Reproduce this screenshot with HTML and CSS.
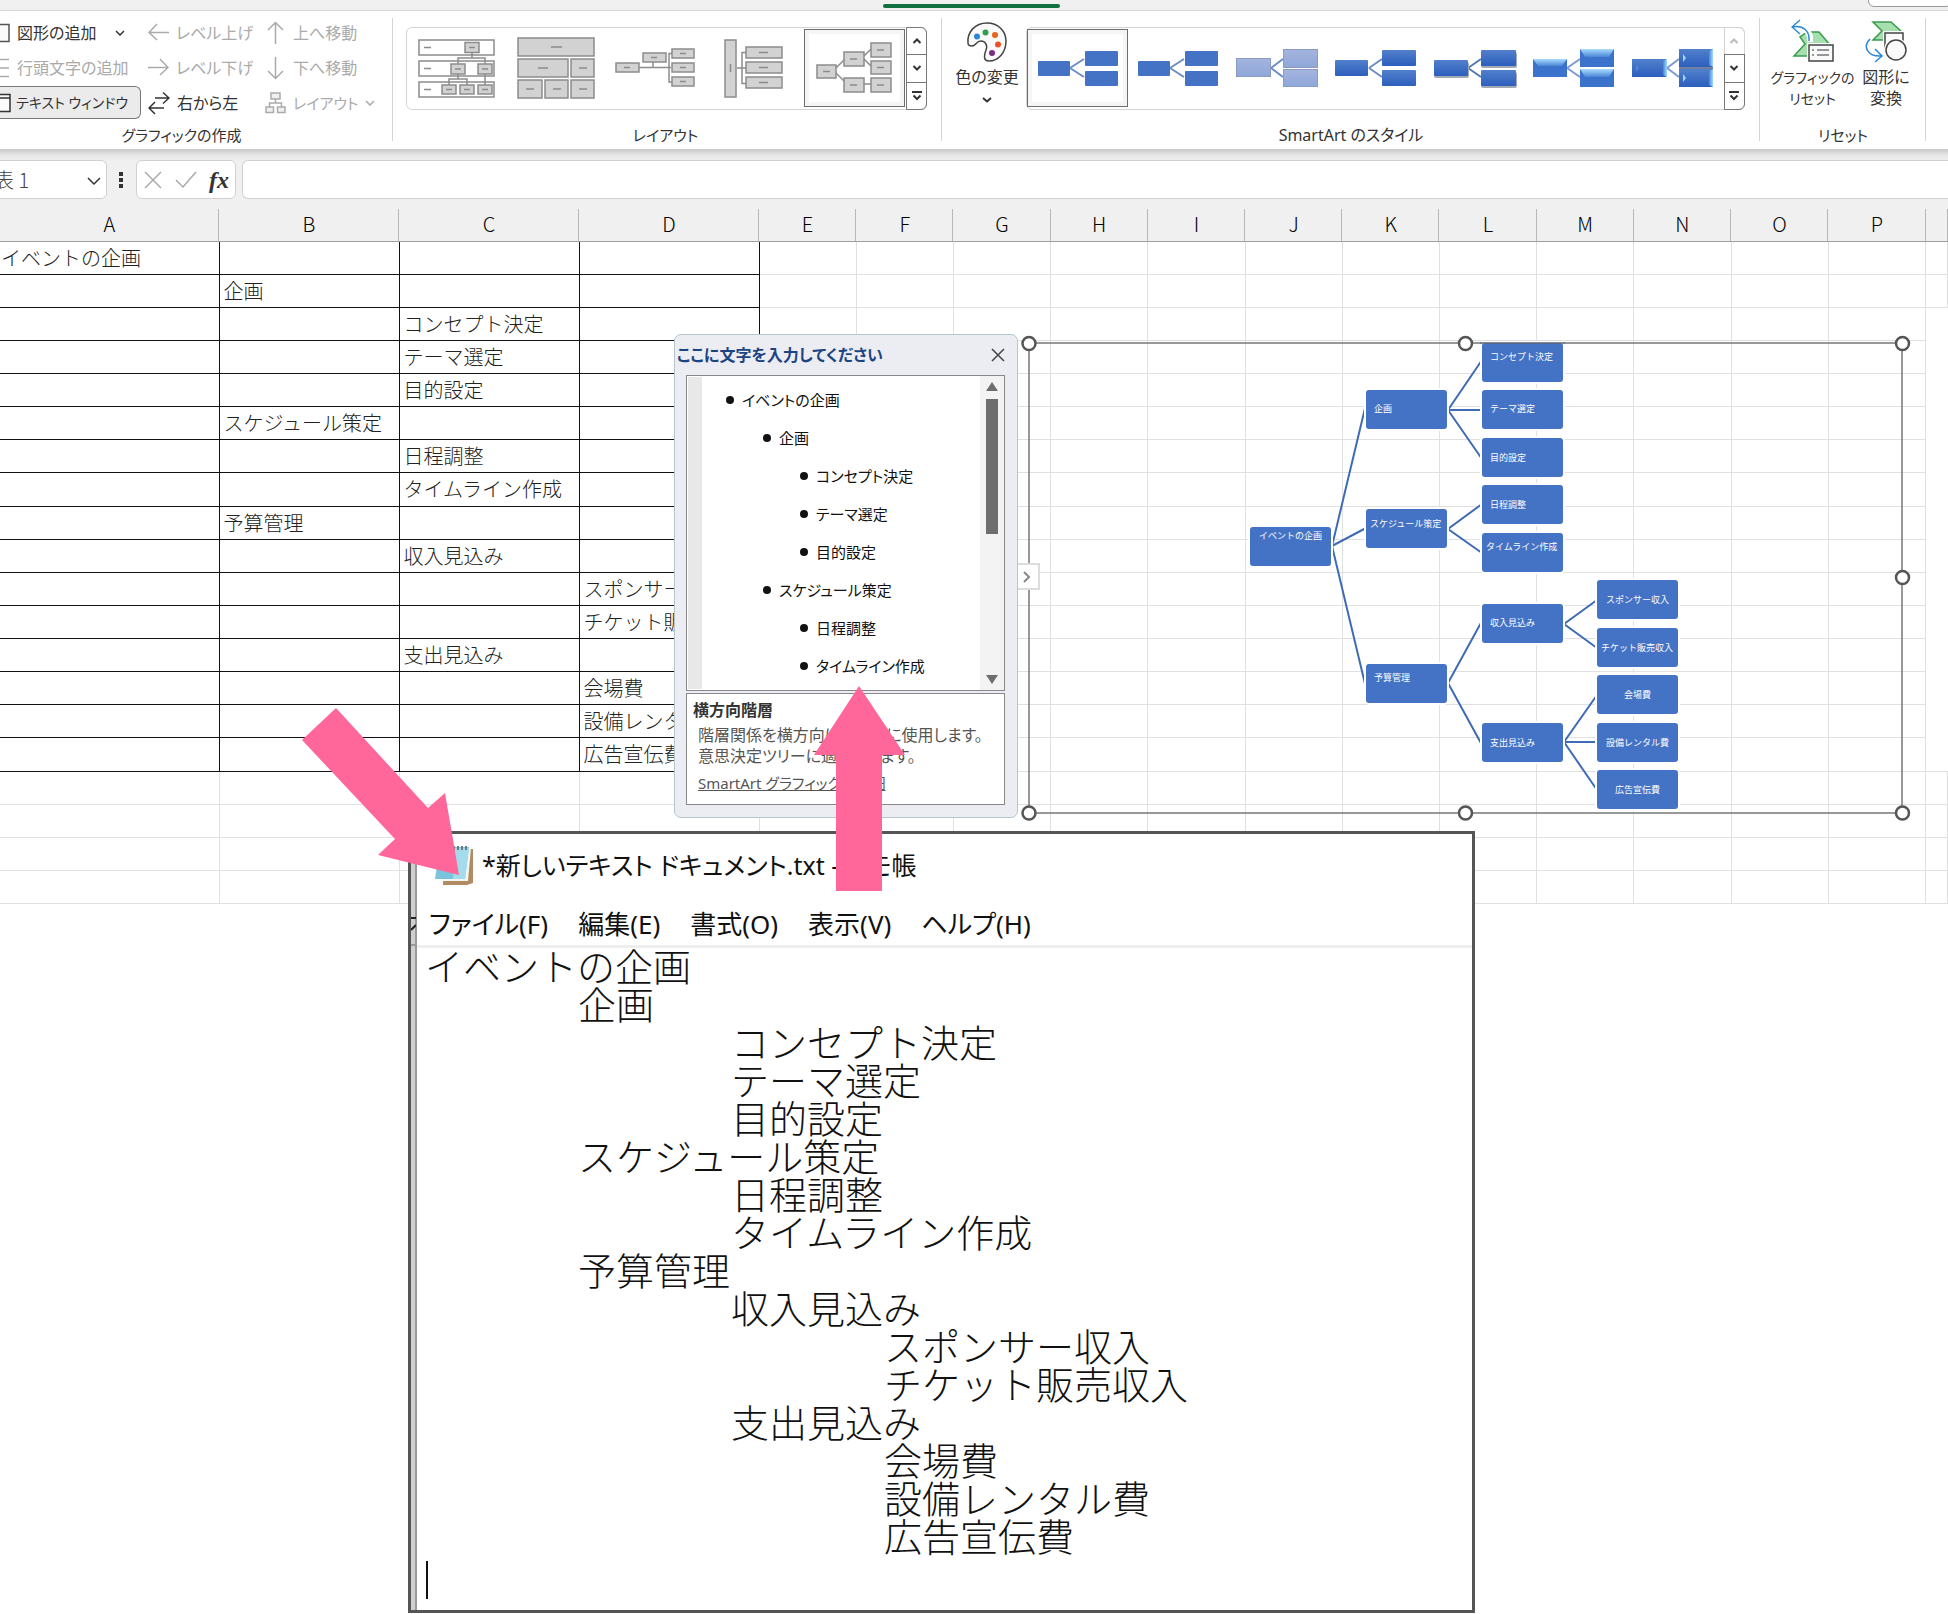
FILE: index.html
```html
<!DOCTYPE html>
<html lang="ja">
<head>
<meta charset="utf-8">
<title>イベントの企画 - Excel</title>
<link rel="stylesheet" href="styles.css">
</head>
<body>
<svg width="0" height="0" class="defs" aria-hidden="true">
  <defs>
    <linearGradient id="g-dark" x1="0" y1="0" x2="0" y2="1"><stop offset="0" stop-color="#5280cc"/><stop offset="1" stop-color="#2c5fbd"/></linearGradient>
    <linearGradient id="g-pale" x1="0" y1="0" x2="0" y2="1"><stop offset="0" stop-color="#a4b4de"/><stop offset="1" stop-color="#8fa7d9"/></linearGradient>
    <linearGradient id="g-shine" x1="0" y1="0" x2="0" y2="1"><stop offset="0" stop-color="#a9dcff"/><stop offset="1" stop-color="#4a86d6"/></linearGradient>
    <linearGradient id="g-side" x1="0" y1="0" x2="1" y2="0"><stop offset="0" stop-color="#4a86d6"/><stop offset="1" stop-color="#9fdcff"/></linearGradient>
  </defs>
</svg>

<div class="tabstrip"><span class="tab-active"></span><span class="tab-box"></span></div>

<div class="ribbon">
  <section class="group group-create">
    <div class="create-grid">
      <button class="cmd"><svg width="10" height="22"><path d="M0 2.5H9V19.500H0" fill="#fafafa" stroke="#555" stroke-width="1.500"/></svg>図形の追加<svg class="drop" width="10" height="6"><path d="M1 1L5 5L9 1" fill="none" stroke="#333" stroke-width="1.500"/></svg></button>
      <button class="cmd off"><svg width="21" height="22"><path d="M21 10.500H1M9 2L1 10.500L9 18" fill="none" stroke="#aaa" stroke-width="1.500"/></svg>レベル上げ</button>
      <button class="cmd off"><svg width="21" height="24"><path d="M10.500 23V2M3 9L10.500 1.500L18 9" fill="none" stroke="#aaa" stroke-width="1.500"/></svg>上へ移動</button>
      <button class="cmd off"><svg width="10" height="22"><path d="M0 2.500H9M0 11H9M0 19.500H9" stroke="#aaa" stroke-width="1.500"/></svg>行頭文字の追加</button>
      <button class="cmd off"><svg width="21" height="22"><path d="M0 10.500H20M12 2L20 10.500L12 18" fill="none" stroke="#aaa" stroke-width="1.500"/></svg>レベル下げ</button>
      <button class="cmd off"><svg width="21" height="24"><path d="M10.500 1V22M3 15L10.500 22.500L18 15" fill="none" stroke="#aaa" stroke-width="1.500"/></svg>下へ移動</button>
      <button class="cmd pressed"><svg width="11" height="22"><path d="M0 2.500H10V19.500H0M0 6H10" fill="#fafafa" stroke="#333" stroke-width="1.500"/></svg>テキスト ウィンドウ</button>
      <button class="cmd"><svg width="22" height="24"><path d="M7 7H21M15 1.500L21 7L15 12.500M16 17H1M7 11L1 17L7 23" fill="none" stroke="#333" stroke-width="1.500"/></svg>右から左</button>
      <button class="cmd off kana"><svg width="21" height="22"><g fill="#f0f0f0" stroke="#aaa" stroke-width="1.500"><path d="M10.500 7V11M4.500 15V11H16.500V15" fill="none"/><rect x="6" y="1" width="9" height="6"/><rect x="1" y="15" width="7.500" height="5.500"/><rect x="12.500" y="15" width="7.500" height="5.500"/></g></svg>レイアウト<svg width="10" height="6"><path d="M1 1L5 5L9 1" fill="none" stroke="#aaa" stroke-width="1.500"/></svg></button>
    </div>
    <h2 class="group-label">グラフィックの作成</h2>
  </section>

  <section class="group group-layout">
    <div class="gallery">
      <button class="thumb" aria-label="レイアウト 1"><svg width="78" height="62"><g fill="#fff" stroke="#8c8c8c" stroke-width="1.500"><rect x="1" y="3" width="75" height="15"/><rect x="1" y="24" width="75" height="15"/><rect x="1" y="45" width="75" height="15"/><path d="M54 16V21M40 27V21H67V27M40 37V42M31 48V42H49V48M67 37V48" fill="none"/><g fill="#d2d2d2"><rect x="47" y="5.500" width="14" height="10"/><rect x="33" y="27" width="14" height="10"/><rect x="60" y="27" width="14" height="10"/><rect x="24" y="48" width="14" height="9"/><rect x="42" y="48" width="14" height="9"/><rect x="60" y="48" width="14" height="9"/></g><path d="M6 10.500H13M6 31.500H13M6 52.500H13M51 10.500H57M37 32H43M64 32H70M28 52.500H34M46 52.500H52M64 52.500H70"/></g></svg></button>
      <button class="thumb" aria-label="レイアウト 2"><svg width="78" height="62"><g fill="#d2d2d2" stroke="#8c8c8c" stroke-width="1.500"><rect x="1" y="1" width="76" height="18"/><rect x="1" y="22" width="50" height="18"/><rect x="54" y="22" width="23" height="18"/><rect x="1" y="43" width="24" height="18"/><rect x="28" y="43" width="23" height="18"/><rect x="54" y="43" width="23" height="18"/><path d="M34 10H45M21 31H31M62 31H70M9 52H17M36 52H44M62 52H70"/></g></svg></button>
      <button class="thumb" aria-label="レイアウト 3"><svg width="80" height="62"><g fill="#d2d2d2" stroke="#8c8c8c" stroke-width="1.500"><path d="M24 30.500H56M38 25V30.500M57 16.500H54V45H57" fill="none"/><rect x="1" y="26" width="23" height="9"/><rect x="28" y="16" width="23" height="9"/><rect x="57" y="12" width="22" height="9"/><rect x="57" y="26" width="22" height="9"/><rect x="57" y="40" width="22" height="9"/><path d="M9 30.500H15M36 20.500H42M65 16.500H71M65 30.500H71M65 44.500H71"/></g></svg></button>
      <button class="thumb" aria-label="レイアウト 4"><svg width="60" height="62"><g fill="#d2d2d2" stroke="#8c8c8c" stroke-width="1.500"><path d="M13 31H22M22 15.500H18V46.500H22" fill="none"/><rect x="1" y="3" width="11" height="57"/><rect x="22" y="10" width="36" height="11"/><rect x="22" y="25" width="36" height="11"/><rect x="22" y="40" width="36" height="11"/><path d="M6.500 27V35M35 15.500H44M35 30.500H44M35 45.500H44"/></g></svg></button>
      <button class="thumb selected" aria-label="横方向階層"><svg width="76" height="62"><g fill="#d2d2d2" stroke="#8c8c8c" stroke-width="1.500"><path d="M20 31L28 23M20 36L28 44M48 19L55 12M48 22L55 29M48 47H55" fill="none"/><rect x="1" y="28" width="19" height="13"/><rect x="28" y="15" width="20" height="14"/><rect x="28" y="41" width="20" height="14"/><rect x="55" y="6" width="20" height="14"/><rect x="55" y="24" width="20" height="13"/><rect x="55" y="41" width="20" height="14"/><path d="M7 34.500H14M34 22H41M34 48H41M61 13H68M61 30.500H68M61 48H68"/></g></svg></button>
      <div class="spin">
        <button aria-label="上へ"><svg width="10" height="6"><path d="M1.500 5L5 1.500L8.500 5"/></svg></button>
        <button aria-label="下へ"><svg width="10" height="6"><path d="M1.500 1L5 4.500L8.500 1"/></svg></button>
        <button aria-label="その他"><svg width="10" height="10"><path d="M0 1H10M1.500 4.500L5 8L8.500 4.500"/></svg></button>
      </div>
    </div>
    <h2 class="group-label">レイアウト</h2>
  </section>

  <section class="group group-style">
    <div class="style-row">
      <button class="big"><svg width="42" height="42"><path d="M2 22C1 11 9 2 21 2C32 2 40 10 40 20C40 32 32 40 23 40C17 40 18 34 20 29C22 24 19 20 15 20C10 20 10 25 6 25C3 25 2 24 2 22Z" fill="#fafafa" stroke="#444" stroke-width="1.500"/><circle cx="11" cy="15.500" r="3" fill="#2b88d8"/><circle cx="19.500" cy="11.500" r="3" fill="#2e9e4f"/><circle cx="29" cy="14" r="3" fill="#e8641b"/><circle cx="32" cy="23.500" r="3" fill="#f04e23"/><circle cx="26" cy="32" r="3" fill="#7b2a86"/></svg><span>色の変更</span><svg width="10" height="6"><path d="M1 1L5 4.500L9 1" fill="none" stroke="#333" stroke-width="2"/></svg></button>
      <div class="gallery">
        <button class="thumb selected" aria-label="スタイル 1"><svg width="82" height="40"><path d="M33 20L47 11M33 20L47 29" stroke="#6b8cc4" stroke-width="2"/><g fill="#4472c4"><rect x="1" y="13" width="32" height="15" rx="1"/><rect x="48" y="3" width="33" height="15" rx="1"/><rect x="48" y="23" width="33" height="15" rx="1"/></g></svg></button>
        <button class="thumb" aria-label="スタイル 2"><svg width="82" height="40"><path d="M33 20L47 11M33 20L47 29" stroke="#6b8cc4" stroke-width="2"/><g fill="#4472c4"><rect x="1" y="13" width="32" height="15" rx="1"/><rect x="48" y="3" width="33" height="15" rx="1"/><rect x="48" y="23" width="33" height="15" rx="1"/></g></svg></button>
        <button class="thumb" aria-label="スタイル 3"><svg width="84" height="40"><path d="M36 20L48 11M36 20L48 29" stroke="#6b8cc4" stroke-width="2"/><g fill="url(#g-pale)" stroke="#8a9cc4"><rect x="1.500" y="10.500" width="34" height="18"/><rect x="48.500" y="1.500" width="34" height="18"/><rect x="48.500" y="21.500" width="34" height="17"/></g></svg></button>
        <button class="thumb" aria-label="スタイル 4"><svg width="84" height="40"><path d="M35 20L48 11M35 20L48 29" stroke="#6b8cc4" stroke-width="2"/><g fill="url(#g-dark)"><rect x="1" y="12" width="33" height="16" rx="1"/><rect x="48" y="2" width="34" height="16" rx="1"/><rect x="48" y="22" width="34" height="16" rx="1"/></g></svg></button>
        <button class="thumb" aria-label="スタイル 5"><svg width="84" height="40"><path d="M35 20L48 11M35 20L48 29" stroke="#5579b5" stroke-width="2"/><g fill="#a3a9b5"><rect x="1" y="14" width="35" height="16" rx="2"/><rect x="48" y="4" width="36" height="16" rx="2"/><rect x="48" y="24" width="36" height="16" rx="2"/></g><g fill="url(#g-dark)"><rect x="1" y="12" width="34" height="16" rx="1"/><rect x="48" y="2" width="35" height="16" rx="1"/><rect x="48" y="22" width="35" height="16" rx="1"/></g></svg></button>
        <button class="thumb" aria-label="スタイル 6"><svg width="84" height="40"><path d="M35 20L48 11M35 20L48 29" stroke="#7d9ace" stroke-width="2"/><g fill="#3a72cc"><rect x="1" y="11" width="34" height="18"/><rect x="48" y="1" width="34" height="18"/><rect x="48" y="21" width="34" height="18"/></g><g fill="url(#g-shine)"><path d="M1 11H35L30 18H6Z"/><path d="M48 1H82L77 9H53Z"/><path d="M48 21H82L77 29H53Z"/></g></svg></button>
        <button class="thumb" aria-label="スタイル 7"><svg width="84" height="40"><path d="M36 20L48 11M36 20L48 29" stroke="#7d9ace" stroke-width="2"/><path d="M48 18H82V22H48Z" fill="#71809c"/><g fill="url(#g-dark)"><rect x="1" y="11" width="34" height="18"/><rect x="48" y="1" width="34" height="18"/><rect x="48" y="21" width="34" height="18"/></g><g fill="url(#g-side)"><path d="M32 13L36 11V29L32 27Z"/><path d="M78 3L82 1V19L78 17Z"/><path d="M78 23L82 21V39L78 37Z"/><path d="M5 16L8 20L5 24ZM52 6L55 10L52 14ZM52 26L55 30L52 34Z"/></g></svg></button>
        <div class="spin">
          <button aria-label="上へ" disabled><svg width="10" height="6"><path d="M1.500 5L5 1.500L8.500 5"/></svg></button>
          <button aria-label="下へ"><svg width="10" height="6"><path d="M1.500 1L5 4.500L8.500 1"/></svg></button>
          <button aria-label="その他"><svg width="10" height="10"><path d="M0 1H10M1.500 4.500L5 8L8.500 4.500"/></svg></button>
        </div>
      </div>
    </div>
    <h2 class="group-label wide">SmartArt のスタイル</h2>
  </section>

  <section class="group group-reset">
    <div class="reset-row">
      <button class="big kana"><svg width="44" height="44"><path d="M16 13H28L40 27H24V37H3L14 25L9 18Z" fill="#a5dfae" stroke="#3a9a4e" stroke-width="1.500"/><path d="M2 8C13 6 20 12 19 23" fill="none" stroke="#fff" stroke-width="6"/><path d="M9 1L1 8L9 15M2 8C12 6 19 12 18 22" fill="none" stroke="#2b88d8" stroke-width="1.500"/><rect x="16" y="24" width="27" height="20" fill="#fff"/><rect x="18" y="26" width="24" height="16" fill="#fafafa" stroke="#444" stroke-width="1.500"/><path d="M21 31H23M26 31H38M21 36H23M26 36H38" stroke="#777" stroke-width="1.500"/></svg><span>グラフィックの<br>リセット</span></button>
      <button class="big"><svg width="44" height="44"><path d="M9 3H27L38 13L28 21H9L18 12Z" fill="#a5dfae" stroke="#3a9a4e" stroke-width="1.500"/><rect x="19" y="12" width="22" height="24" fill="#fff"/><rect x="21" y="14" width="18" height="18" fill="#fafafa" stroke="#444" stroke-width="1.500"/><circle cx="32" cy="31" r="12" fill="#fff"/><circle cx="32" cy="31" r="10" fill="#fafafa" stroke="#444" stroke-width="1.500"/><path d="M6 20C-2 28 4 38 18 37M11 30L18 37L11 43" fill="none" stroke="#2b88d8" stroke-width="1.500"/></svg><span>図形に<br>変換</span></button>
    </div>
    <h2 class="group-label">リセット</h2>
  </section>
</div>

<div class="formula-bar">
  <label class="name-box"><select aria-label="名前ボックス"><option>表 1</option></select><svg width="14" height="9"><path d="M1 1L7 7L13 1" fill="none" stroke="#333" stroke-width="1.500"/></svg></label>
  <svg class="grip" width="4" height="16" fill="#333"><rect width="4" height="4"/><rect y="6" width="4" height="4"/><rect y="12" width="4" height="4"/></svg>
  <div class="fx-box">
    <button aria-label="キャンセル"><svg width="18" height="18"><path d="M1 1L17 17M17 1L1 17" stroke="#aaa" stroke-width="1.500"/></svg></button>
    <button aria-label="入力"><svg width="22" height="18"><path d="M1 9L8 16L21 1" fill="none" stroke="#aaa" stroke-width="1.500"/></svg></button>
    <button class="fx" aria-label="関数の挿入">fx</button>
  </div>
  <input class="formula" aria-label="数式バー">
</div>

<main class="workspace">
<table class="sheet">
<colgroup><col class="col-a"><col class="col-data" span="3"><col span="12"><col class="col-last"></colgroup>
<thead><tr><th>A<th>B<th>C<th>D<th>E<th>F<th>G<th>H<th>I<th>J<th>K<th>L<th>M<th>N<th>O<th>P<th></tr></thead>
<tbody class="data">
<tr><td>イベントの企画<td><td><td><td><td><td><td><td><td><td><td><td><td><td><td><td>
<tr><td><td>企画<td><td><td><td><td><td><td><td><td><td><td><td><td><td><td>
<tr><td><td><td>コンセプト決定<td><td><td><td><td><td><td><td><td><td><td><td><td>
<tr><td><td><td>テーマ選定<td><td><td><td><td><td><td><td><td><td><td><td><td>
<tr><td><td><td>目的設定<td><td><td><td><td><td><td><td><td><td><td><td><td>
<tr><td><td>スケジュール策定<td><td><td><td><td><td><td><td><td><td><td><td><td><td>
<tr><td><td><td>日程調整<td><td><td><td><td><td><td><td><td><td><td><td><td>
<tr><td><td><td>タイムライン作成<td><td><td><td><td><td><td><td><td><td><td><td><td>
<tr><td><td>予算管理<td><td><td><td><td><td><td><td><td><td><td><td><td><td>
<tr><td><td><td>収入見込み<td><td><td><td><td><td><td><td><td><td><td><td><td>
<tr><td><td><td><td>スポンサー収入<td><td><td><td><td><td><td><td><td><td><td><td>
<tr><td><td><td><td>チケット販売収入<td><td><td><td><td><td><td><td><td><td><td><td>
<tr><td><td><td>支出見込み<td><td><td><td><td><td><td><td><td><td><td><td><td>
<tr><td><td><td><td>会場費<td><td><td><td><td><td><td><td><td><td><td><td>
<tr><td><td><td><td>設備レンタル費<td><td><td><td><td><td><td><td><td><td><td><td>
<tr><td><td><td><td>広告宣伝費<td><td><td><td><td><td><td><td><td><td><td><td>
</tbody>
<tbody>
<tr><td><td><td><td><td><td><td><td><td><td><td><td><td><td><td><td><td>
<tr><td><td><td><td><td><td><td><td><td><td><td><td><td><td><td><td><td>
<tr><td><td><td><td><td><td><td><td><td><td><td><td><td><td><td><td><td>
<tr><td><td><td><td><td><td><td><td><td><td><td><td><td><td><td><td><td>
</tbody>
</table>

<svg class="smartart" width="892" height="488" viewBox="1020 334 892 488">
  <rect x="1029" y="343" width="873" height="470" fill="none" stroke="#777" stroke-width="1.500"/>
  <g stroke="#3f6bb5" stroke-width="2" fill="none">
    <path d="M1366 404L1332 546L1366 528M1332 546L1366 688"/>
    <path d="M1482 360L1448 410H1482M1448 410L1482 459"/>
    <path d="M1482 504L1448 529L1482 553"/>
    <path d="M1482 621L1448 683L1482 745"/>
    <path d="M1597 600L1564 624L1597 648"/>
    <path d="M1597 695L1564 742H1597M1564 742L1597 790"/>
  </g>
  <g fill="#4472c4" stroke="#fff" stroke-width="4" paint-order="stroke">
    <rect x="1250" y="527" width="81" height="39" rx="3"/>
    <rect x="1366" y="390" width="81" height="39" rx="3"/>
    <rect x="1366" y="509" width="81" height="39" rx="3"/>
    <rect x="1366" y="664" width="81" height="39" rx="3"/>
    <rect x="1482" y="343" width="81" height="39" rx="3"/>
    <rect x="1482" y="390" width="81" height="39" rx="3"/>
    <rect x="1482" y="438" width="81" height="39" rx="3"/>
    <rect x="1482" y="485" width="81" height="39" rx="3"/>
    <rect x="1482" y="533" width="81" height="39" rx="3"/>
    <rect x="1482" y="604" width="81" height="39" rx="3"/>
    <rect x="1482" y="723" width="81" height="39" rx="3"/>
    <rect x="1597" y="580" width="81" height="39" rx="3"/>
    <rect x="1597" y="628" width="81" height="39" rx="3"/>
    <rect x="1597" y="675" width="81" height="39" rx="3"/>
    <rect x="1597" y="723" width="81" height="39" rx="3"/>
    <rect x="1597" y="770" width="81" height="39" rx="3"/>
  </g>
  <path d="M1480 343H1565" stroke="#5d6672" stroke-width="1.500"/>
  <g class="node-text">
    <text x="1259" y="539">イベントの企画</text>
    <text x="1374" y="412">企画</text>
    <text x="1370" y="527">スケジュール策定</text>
    <text x="1374" y="681">予算管理</text>
    <text x="1490" y="360">コンセプト決定</text>
    <text x="1490" y="412">テーマ選定</text>
    <text x="1490" y="461">目的設定</text>
    <text x="1490" y="508">日程調整</text>
    <text x="1486" y="550">タイムライン作成</text>
    <text x="1490" y="626">収入見込み</text>
    <text x="1490" y="746">支出見込み</text>
    <text x="1606" y="603">スポンサー収入</text>
    <text x="1601" y="651">チケット販売収入</text>
    <text x="1624" y="698">会場費</text>
    <text x="1606" y="746">設備レンタル費</text>
    <text x="1615" y="793">広告宣伝費</text>
  </g>
  <g fill="#fff" stroke="#555" stroke-width="2.500">
    <circle cx="1029" cy="343.500" r="6.500"/><circle cx="1465.500" cy="343.500" r="6.500"/><circle cx="1902.500" cy="343.500" r="6.500"/>
    <circle cx="1902.500" cy="577.500" r="6.500"/>
    <circle cx="1029" cy="813" r="6.500"/><circle cx="1465.500" cy="813" r="6.500"/><circle cx="1902.500" cy="813" r="6.500"/>
  </g>
</svg>

<button class="pane-toggle" aria-label="テキスト ウィンドウの表示切替"><svg width="8" height="12"><path d="M1 1L6 6L1 11" fill="none" stroke="#888" stroke-width="2"/></svg></button>

<aside class="pane">
  <header class="pane-head"><h2>ここに文字を入力してください</h2><button aria-label="閉じる"><svg width="14" height="14"><path d="M1 1L13 13M13 1L1 13" stroke="#444" stroke-width="1.500"/></svg></button></header>
  <div class="pane-list">
    <ul>
      <li>イベントの企画</li>
      <li class="lv2">企画</li>
      <li class="lv3">コンセプト決定</li>
      <li class="lv3">テーマ選定</li>
      <li class="lv3">目的設定</li>
      <li class="lv2">スケジュール策定</li>
      <li class="lv3">日程調整</li>
      <li class="lv3">タイムライン作成</li>
    </ul>
    <div class="scroll"><svg width="12" height="9"><path d="M6 0L12 9H0Z" fill="#6e6e6e"/></svg><span class="scroll-thumb"></span><svg width="12" height="9"><path d="M0 0H12L6 9Z" fill="#6e6e6e"/></svg></div>
  </div>
  <div class="pane-info">
    <h3>横方向階層</h3>
    <p>階層関係を横方向に示すのに使用します。<br>意思決定ツリーに適しています。</p>
    <a href="#">SmartArt グラフィックの詳細</a>
  </div>
</aside>

<section class="notepad">
  <header class="np-title"><svg width="38" height="40"><path d="M9 4H38V38L32 40H8Z" fill="#b08a62"/><path d="M7 3H36L33 36H6Z" fill="#f4f4f0"/><path d="M5 2H34L30 34H0Z" fill="#7cc3dc"/><path d="M20 3H34L30 34H18Z" fill="#a5dcec"/><path d="M6 3H34" stroke="#6b7d84" stroke-width="4" stroke-dasharray="2 2"/></svg><h2>*新しいテキスト ドキュメント.txt - メモ帳</h2></header>
  <nav class="np-menu"><button>ファイル(F)</button><button>編集(E)</button><button>書式(O)</button><button>表示(V)</button><button>ヘルプ(H)</button></nav>
  <textarea class="np-text" rows="17" spellcheck="false" aria-label="本文">イベントの企画
	企画
		コンセプト決定
		テーマ選定
		目的設定
	スケジュール策定
		日程調整
		タイムライン作成
	予算管理
		収入見込み
			スポンサー収入
			チケット販売収入
		支出見込み
			会場費
			設備レンタル費
			広告宣伝費
</textarea>
  <span class="caret"></span>
  <svg class="np-edge" width="5" height="30"><path d="M0 2H5M0 14L5 9" stroke="#222" stroke-width="2" fill="none"/><path d="M0 29H5" stroke="#999" stroke-width="2"/></svg>
</section>

<svg class="arrows" width="620" height="210" viewBox="300 684 620 210" fill="#ff6699">
  <path d="M336 708L302 740L395 839L378 855L459 875L445 793L428 808Z"/>
  <path d="M859 686L905 755H882V891H836V755H814Z"/>
</svg>
</main>
</body>
</html>
```
FILE: styles.css
```css
* { box-sizing: border-box; }
body {
  margin: 0;
  min-height: 100vh;
  background: #fff;
  color: #333;
  font: 16px/20px "Noto Sans", "Noto Sans CJK JP", sans-serif;
  font-feature-settings: "palt";
  overflow-x: hidden;
}
button, input, select, textarea { font: inherit; font-feature-settings: inherit; color: inherit; }
button { border: 0; background: none; padding: 0; }
h2, h3, p, ul { margin: 0; padding: 0; font-size: inherit; font-weight: 400; }
svg { flex: none; display: block; }
.defs { position: absolute; }

.tabstrip {
  position: relative;
  height: 11px;
  background: #f0f0f0;
  border-bottom: 1px solid #d8d8d8;
}
.tab-active { position: absolute; left: 883px; top: 4px; width: 177px; height: 4px; border-radius: 2px; background: #0f7040; }
.tab-box { position: absolute; right: -4px; top: -8px; width: 84px; height: 15px; border: 1px solid #999; border-radius: 6px; background: #fff; }

/* Ribbon */
.ribbon { display: flex; height: 138px; background: #fff; }
.group {
  display: flex;
  flex-direction: column;
  justify-content: space-between;
  background: linear-gradient(#d4d4d4, #d4d4d4) right 7px / 1px 123px no-repeat;
}
.group-label { height: 28px; font-size: 15px; line-height: 28px; text-align: center; white-space: nowrap; }
.group-label.wide { font-size: 16px; }
.group-create { flex: 0 0 393px; }
.group-layout { flex: 0 0 549px; }
.group-style { flex: 0 0 818px; }
.group-reset { flex: 0 0 166px; }
.group-create .group-label { padding-right: 30px; }
.group-layout .group-label { padding-right: 4px; }

.create-grid {
  display: grid;
  grid-template: repeat(3, 35px) / 148px 117px 1fr;
  padding-top: 5px;
}
.cmd { display: flex; align-items: center; gap: 7px; height: 33px; white-space: nowrap; }
.cmd.off { color: #aaa; }
.cmd.kana { font-size: 15px; }
.cmd .drop { margin-left: 12px; }
.cmd.pressed { width: 141px; gap: 5px; border: 1px solid #777; border-left: 0; border-radius: 0 6px 6px 0; background: #ebebeb; font-size: 14px; }

.gallery {
  display: flex;
  height: 83px;
  border: 1px solid #d4d4d4;
  border-radius: 6px;
  background: #fff;
}
.group-layout .gallery { margin: 16px 15px 0 13px; }
.thumb { flex: 1; display: grid; place-items: center; margin: 1px 0 2px; }
.thumb.selected { border: 1px solid #6e6e6e; box-shadow: inset 0 0 0 4px #f5f5f5; }
.spin { display: flex; flex-direction: column; width: 21px; margin: -1px -1px -1px 1px; }
.spin button { flex: 1; display: grid; place-items: center; border: 1px solid #777; margin-top: -1px; }
.spin button:first-child { margin-top: 0; border-top-right-radius: 6px; }
.spin button:last-child { border-bottom-right-radius: 6px; }
.spin button:disabled { border-color: #d4d4d4; }
.spin path { fill: none; stroke: #333; stroke-width: 2; }
.spin :disabled path { stroke: #bbb; }

.style-row { display: flex; }
.style-row .big { width: 90px; padding-top: 10px; }
.style-row .gallery { flex: 1; margin: 16px 15px 0 -6px; }
.big { display: flex; flex-direction: column; align-items: center; text-align: center; line-height: 21px; gap: 4px; white-space: nowrap; }
.big.kana { font-size: 14px; }
.style-row .big svg + span { margin-bottom: 5px; }
.reset-row { display: flex; padding: 8px 0 0 12px; gap: 8px; }
.reset-row .big { width: 81px; }
.reset-row .big + .big { width: 50px; }

/* Formula bar */
.formula-bar {
  display: flex;
  align-items: center;
  height: 50px;
  padding: 11px 0 0;
  background: linear-gradient(#c8c8c8, #e6e6e6 6px, #f0f0f0 12px);
}
.formula-bar > * { height: 39px; }
.name-box { position: relative; width: 117px; margin-left: -10px; }
.name-box select {
  appearance: none;
  width: 100%;
  height: 100%;
  padding: 0 0 0 3px;
  border: 1px solid #d0d0d0;
  border-radius: 6px;
  background: #fff;
  color: #444;
  font: 300 20px "Noto Sans CJK JP", sans-serif;
}
.name-box svg { position: absolute; right: 6px; top: 17px; }
.formula-bar .grip { height: 16px; margin: 0 13px 0 12px; }
.fx-box, .formula { border: 1px solid #d0d0d0; border-radius: 6px; background: #fff; }
.fx-box { display: flex; align-items: center; justify-content: space-between; width: 100px; padding: 0 6px 0 7px; }
.fx { font: italic bold 24px/30px "Liberation Serif", serif; }
.formula { flex: 1; min-width: 0; margin-left: 6px; border-right: 0; border-radius: 6px 0 0 6px; }

/* Worksheet */
.workspace { position: relative; }
.sheet {
  width: 100%;
  table-layout: fixed;
  border-collapse: collapse;
  color: #222;
  font: 300 20px/30px "Noto Sans CJK JP", sans-serif;
  font-feature-settings: normal;
}
.col-a { width: 219px; }
.col-data { width: 180px; }
.col-last { width: 22px; }
.sheet th {
  height: 42px;
  padding: 8px 0 0;
  font-weight: 300;
  color: #000;
  background: linear-gradient(#b8b8b8, #b8b8b8) right bottom / 1px 32px no-repeat #f0f0f0;
  border-bottom: 1px solid #a0a0a0;
}
.sheet td {
  height: 33px;
  padding: 0 4px;
  white-space: nowrap;
  border: 1px solid #e0e0e0;
}
.sheet td:first-child { border-left: 0; padding-left: 1px; }
.sheet tr:nth-child(8n) td { height: 34px; }
.data td:nth-child(-n+4) { border-color: #111; }

.smartart { position: absolute; left: 1020px; top: 135px; }
.node-text { font: 9px "Noto Sans CJK JP", sans-serif; font-feature-settings: normal; fill: #fff; }

.pane-toggle {
  position: absolute;
  left: 1014px;
  top: 364px;
  width: 26px;
  height: 27px;
  display: grid;
  place-items: center;
  border: 2px solid #ddd;
  background: #fff;
}

/* SmartArt text pane */
.pane {
  position: absolute;
  left: 674px;
  top: 135px;
  width: 344px;
  height: 484px;
  padding: 0 12px 12px 11px;
  border: 1px solid #b5c6cd;
  border-radius: 7px;
  background: #ecedf3;
  display: flex;
  flex-direction: column;
}
.pane-head { display: flex; justify-content: space-between; align-items: center; height: 40px; margin-left: -9px; }
.pane-head h2 { font-weight: 700; color: #1d4482; }
.pane-list { display: flex; height: 316px; border: 1px solid #888; background: #fff; }
.pane-list ul {
  flex: 1;
  margin: 1px;
  padding: 4px 0 0 28px;
  border-left: 14px solid #e8e8e8;
  list-style: none;
  color: #111;
  font-size: 15px;
}
.pane-list li { display: flex; align-items: center; gap: 8px; height: 38px; line-height: 38px; }
.pane-list li::before { content: ""; width: 8px; height: 8px; margin-left: -4px; border-radius: 50%; background: #111; }
.pane-list .lv2 { padding-left: 37px; }
.pane-list .lv3 { padding-left: 74px; }
.scroll { display: flex; flex-direction: column; align-items: center; width: 24px; padding: 6px 0; background: #f3f3f3; }
.scroll-thumb { width: 12px; height: 135px; margin: 8px 0 auto; background: #6e6e6e; }
.pane-info { flex: 1; margin-top: 2px; padding: 6px 6px 0; border: 1px solid #888; background: #fff; }
.pane-info h3 { font-weight: 700; }
.pane-info p { padding: 5px 0 6px 5px; line-height: 21px; color: #555; white-space: nowrap; }
.pane-info a { margin-left: 5px; color: #555; font-size: 15px; }

/* Notepad window */
.notepad {
  position: absolute;
  left: 408px;
  top: 632px;
  width: 1067px;
  height: 782px;
  border: 3px solid #555;
  background: linear-gradient(90deg, #cfcfcf 4px, #999 4px, #999 6px, #fff 6px);
  color: #111;
}
.notepad header { font-size: 25px; line-height: 40px; }
.notepad nav { font-size: 26px; line-height: 40px; }
.np-title { display: flex; align-items: center; gap: 9px; height: 62px; padding-left: 24px; }
.np-menu { display: flex; gap: 30px; height: 52px; margin-left: 6px; padding: 6px 0 0 12px; align-items: center; border-bottom: 3px solid #eee; }
.np-text {
  display: block;
  width: calc(100% - 14px);
  margin: -2px 0 0 14px;
  padding: 0;
  border: 0;
  resize: none;
  overflow: hidden;
  background: none;
  font: 300 38px/38px "Noto Sans CJK JP", sans-serif;
  font-feature-settings: normal;
  tab-size: 153px;
}
.caret { position: absolute; left: 15px; bottom: 11px; width: 2px; height: 38px; background: #111; }
.np-edge { position: absolute; left: 0; top: 82px; }

.arrows { position: absolute; left: 300px; top: 485px; }
```
